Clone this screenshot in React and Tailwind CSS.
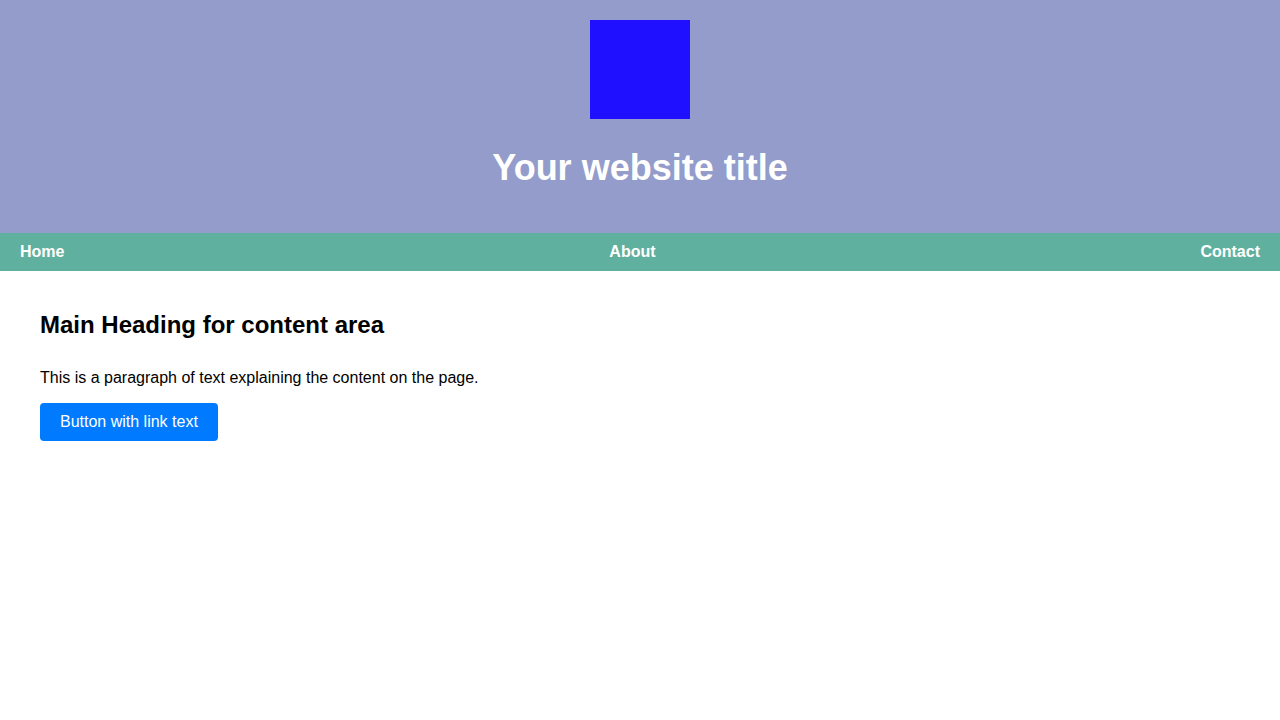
export default function App() {
  return (
    <div className="min-h-[720px] bg-white" style={{ fontFamily: '"Liberation Sans", Arial, sans-serif' }}>
      <header className="flex flex-col items-center bg-[#939cca] pt-[20px] pb-[20px]">
        <div className="h-[99px] w-[100px] bg-[#1f10ff]" />
        <h1 className="mt-[28px] mb-[25px] text-[36px] font-bold leading-[41px] text-white">Your website title</h1>
      </header>
      <nav className="flex h-[38px] items-center justify-between bg-[#5fb09e] px-[20px] text-[16px] font-bold text-white">
        <a>Home</a>
        <a>About</a>
        <a>Contact</a>
      </nav>
      <main className="p-[40px]">
        <h2 className="text-[24px] font-bold leading-[28px] text-black">Main Heading for content area</h2>
        <p className="mt-[30px] text-[16px] leading-[18px] text-black">This is a paragraph of text explaining the content on the page.</p>
        <a className="mt-[16px] inline-flex h-[38px] items-center rounded-[4px] bg-[#007bff] px-[20px] text-[16px] text-white">Button with link text</a>
      </main>
    </div>
  );
}
